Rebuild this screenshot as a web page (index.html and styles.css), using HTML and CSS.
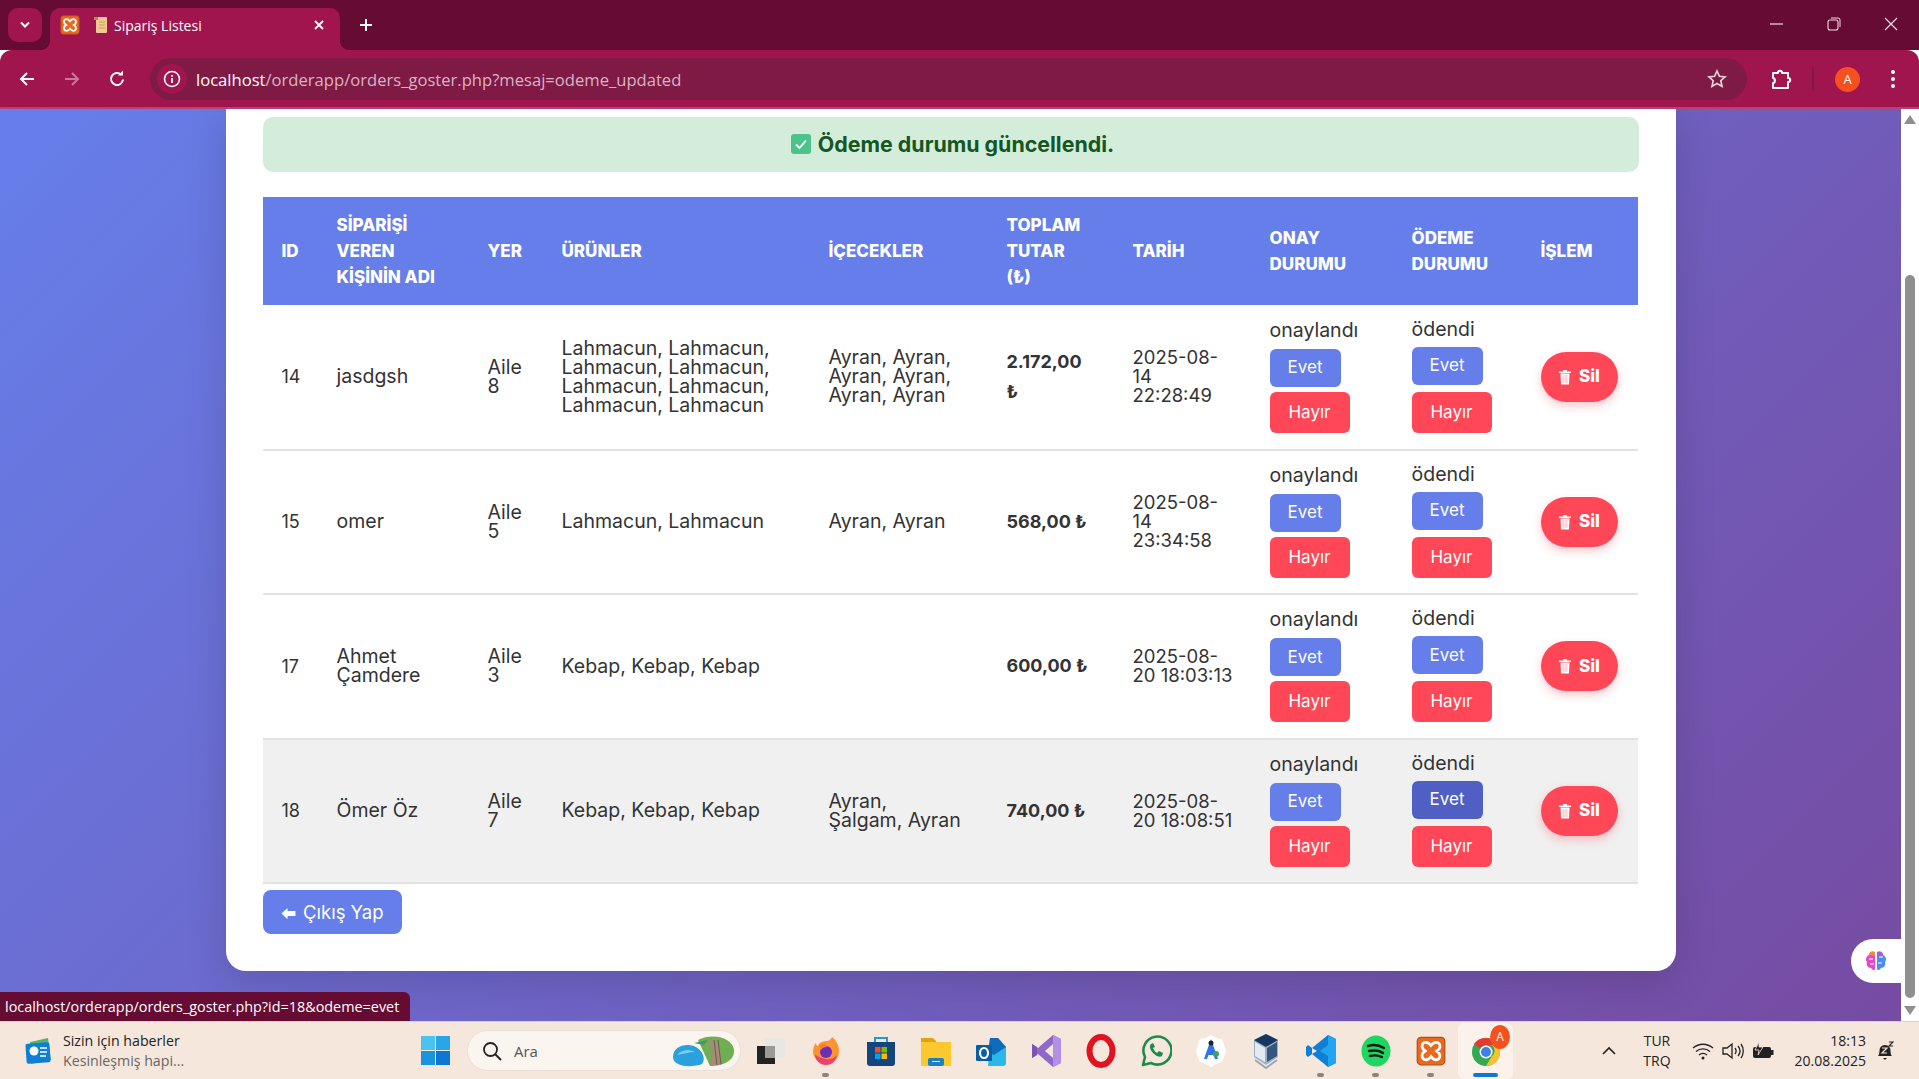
FILE: index.html
```html
<!DOCTYPE html>
<html lang="tr">
<head>
<meta charset="utf-8">
<title>Sipariş Listesi</title>
<link rel="stylesheet" href="styles.css">
</head>
<body>
<svg class="sprite" width="0" height="0">
	<symbol id="xampp" viewBox="0 0 24 24">
		<rect x="1" y="1" width="22" height="22" rx="3" fill="#e8691f"/>
		<rect x="1" y="1" width="22" height="22" rx="3" fill="none" stroke="#b44f14" stroke-width="1"/>
		<path d="M8 5c-3 0-4 3-2.400 5.500L7.500 12l-2 1.500C4 16 5 19 8 19c2 0 3-1.200 4-2.500 1 1.300 2 2.500 4 2.500 3 0 4-3 2.400-5.500l-1.900-1.500 2-1.500C20 8 19 5 16 5c-2 0-3 1.200-4 2.500C11 6.200 10 5 8 5z" fill="none" stroke="#fff" stroke-width="2.200"/>
	</symbol>
	<symbol id="trash" viewBox="0 0 14 16">
		<path d="M1 2.500h12v1.500H1zM5 1h4v1.500H5zM2.500 4.500h9L11 15.500H3z" fill="#fff"/>
		<path d="M5.200 6v8M7 6v8M8.800 6v8" stroke="#ff8f99" stroke-width=".6"/>
	</symbol>
</svg>

<div class="tabbar">
	<div class="tab-list-btn"><svg width="12" height="8" viewBox="0 0 12 8"><path d="M2 1.500l4 4 4-4" fill="none" stroke="#fff" stroke-width="2"/></svg></div>
	<div class="tab">
		<svg class="fav" width="20" height="20"><use href="#xampp"/></svg>
		<svg class="scroll-ico" width="14" height="18" viewBox="0 0 14 18"><rect x="2" y="1" width="11" height="16" rx="1" fill="#f2c98e"/><rect x="0" y="1" width="4" height="3" fill="#b98a4e"/><path d="M5 6h6M5 9h6M5 12h6" stroke="#c99c62"/></svg>
		<span class="tab-title">Sipariş Listesi</span>
		<svg class="tab-close" width="12" height="12" viewBox="0 0 12 12"><path d="M2 2l8 8M10 2l-8 8" stroke="#fff" stroke-width="1.800"/></svg>
	</div>
	<svg class="new-tab" width="14" height="14" viewBox="0 0 14 14"><path d="M7 1v12M1 7h12" stroke="#fff" stroke-width="2"/></svg>
	<div class="win-controls">
		<svg width="14" height="14" viewBox="0 0 14 14"><path d="M0 7h13" stroke="#f3dbe5" stroke-width="1.200"/></svg>
		<svg width="14" height="14" viewBox="0 0 14 14"><rect x="1" y="3" width="10" height="10" rx="2" fill="none" stroke="#f3dbe5" stroke-width="1.100"/><path d="M4 1h7a2 2 0 0 1 2 2v7" fill="none" stroke="#f3dbe5"/></svg>
		<svg width="14" height="14" viewBox="0 0 14 14"><path d="M1 1l12 12M13 1L1 13" stroke="#f3dbe5" stroke-width="1.200"/></svg>
	</div>
</div>

<div class="toolbar">
	<svg class="nav-ico" width="18" height="18" viewBox="0 0 18 18"><path d="M16 9H3M9 3L3 9l6 6" fill="none" stroke="#fff" stroke-width="2"/></svg>
	<svg class="nav-ico" width="18" height="18" viewBox="0 0 18 18"><path d="M2 9h13M9 3l6 6-6 6" fill="none" stroke="#c9789a" stroke-width="2"/></svg>
	<svg class="nav-ico" width="18" height="18" viewBox="0 0 18 18"><path d="M15 9.500A6 6 0 1 1 13 4.500" fill="none" stroke="#fff" stroke-width="2"/><path d="M10 5.500h5v-5z" fill="#fff"/></svg>
	<div class="omnibox">
		<div class="info-chip"><svg width="18" height="18" viewBox="0 0 18 18"><circle cx="9" cy="9" r="7.500" fill="none" stroke="#fff" stroke-width="1.600"/><path d="M9 8v5M9 5v1.800" stroke="#fff" stroke-width="1.800"/></svg></div>
		<span class="url"><b>localhost</b>/orderapp/orders_goster.php?mesaj=odeme_updated</span>
		<svg class="star" width="20" height="20" viewBox="0 0 20 20"><path d="M10 2l2.400 5.300 5.600.6-4.200 3.800 1.200 5.700L10 14.500l-5 2.900 1.200-5.700L2 7.900l5.600-.6z" fill="none" stroke="#e8d3dc" stroke-width="1.700"/></svg>
	</div>
	<svg class="puzzle" width="22" height="22" viewBox="0 0 22 22"><path d="M3 5h5c0-3 4-3 4 0h6v5c3 0 3 4 0 4v6H3v-5c2.500 0 2.500-5 0-5z" fill="none" stroke="#fff" stroke-width="2" stroke-linejoin="round"/></svg>
	<span class="tool-sep"></span>
	<span class="avatar">A</span>
	<svg class="dots" width="6" height="20" viewBox="0 0 6 20"><circle cx="3" cy="3" r="2" fill="#fff"/><circle cx="3" cy="10" r="2" fill="#fff"/><circle cx="3" cy="17" r="2" fill="#fff"/></svg>
</div>
<div class="toolbar-line"></div>

<div class="viewport">
	<div class="page">
		<div class="card">
			<div class="alert">
				<svg width="20" height="20" viewBox="0 0 20 20"><rect x="0" y="0" width="20" height="20" rx="3" fill="#4cc38a"/><path d="M5 10.500l3.500 3.500L15 6.500" fill="none" stroke="#fff" stroke-width="1.800"/></svg>
				Ödeme durumu güncellendi.
			</div>
			<table class="orders">
				<thead>
					<tr>
						<th class="c-id">ID</th>
						<th class="c-name">SİPARİŞİ<br>VEREN<br>KİŞİNİN ADI</th>
						<th class="c-place">YER</th>
						<th class="c-items">ÜRÜNLER</th>
						<th class="c-drinks">İÇECEKLER</th>
						<th class="c-total">TOPLAM<br>TUTAR<br>(₺)</th>
						<th class="c-date">TARİH</th>
						<th class="c-ok">ONAY<br>DURUMU</th>
						<th class="c-pay">ÖDEME<br>DURUMU</th>
						<th class="c-act">İŞLEM</th>
					</tr>
				</thead>
				<tbody>
					<tr>
						<td class="cell-id">14</td>
						<td>jasdgsh</td>
						<td>Aile<br>8</td>
						<td>Lahmacun, Lahmacun,<br>Lahmacun, Lahmacun,<br>Lahmacun, Lahmacun,<br>Lahmacun, Lahmacun</td>
						<td>Ayran, Ayran,<br>Ayran, Ayran,<br>Ayran, Ayran</td>
						<td><span class="amount">2.172,00<br>₺</span></td>
						<td class="cell-date">2025-08-<br>14<br>22:28:49</td>
						<td><div class="status"><span>onaylandı</span><a class="btn btn-yes">Evet</a><a class="btn btn-no">Hayır</a></div></td>
						<td><div class="status status-pay"><span>ödendi</span><a class="btn btn-yes">Evet</a><a class="btn btn-no">Hayır</a></div></td>
						<td><a class="btn-del"><svg width="14" height="16"><use href="#trash"/></svg>Sil</a></td>
					</tr>
					<tr>
						<td class="cell-id">15</td>
						<td>omer</td>
						<td>Aile<br>5</td>
						<td>Lahmacun, Lahmacun</td>
						<td>Ayran, Ayran</td>
						<td><span class="amount">568,00 ₺</span></td>
						<td class="cell-date">2025-08-<br>14<br>23:34:58</td>
						<td><div class="status"><span>onaylandı</span><a class="btn btn-yes">Evet</a><a class="btn btn-no">Hayır</a></div></td>
						<td><div class="status status-pay"><span>ödendi</span><a class="btn btn-yes">Evet</a><a class="btn btn-no">Hayır</a></div></td>
						<td><a class="btn-del"><svg width="14" height="16"><use href="#trash"/></svg>Sil</a></td>
					</tr>
					<tr>
						<td class="cell-id">17</td>
						<td>Ahmet<br>Çamdere</td>
						<td>Aile<br>3</td>
						<td>Kebap, Kebap, Kebap</td>
						<td></td>
						<td><span class="amount">600,00 ₺</span></td>
						<td class="cell-date">2025-08-<br>20 18:03:13</td>
						<td><div class="status"><span>onaylandı</span><a class="btn btn-yes">Evet</a><a class="btn btn-no">Hayır</a></div></td>
						<td><div class="status status-pay"><span>ödendi</span><a class="btn btn-yes">Evet</a><a class="btn btn-no">Hayır</a></div></td>
						<td><a class="btn-del"><svg width="14" height="16"><use href="#trash"/></svg>Sil</a></td>
					</tr>
					<tr class="row-hover">
						<td class="cell-id">18</td>
						<td>Ömer Öz</td>
						<td>Aile<br>7</td>
						<td>Kebap, Kebap, Kebap</td>
						<td>Ayran,<br>Şalgam, Ayran</td>
						<td><span class="amount">740,00 ₺</span></td>
						<td class="cell-date">2025-08-<br>20 18:08:51</td>
						<td><div class="status"><span>onaylandı</span><a class="btn btn-yes">Evet</a><a class="btn btn-no">Hayır</a></div></td>
						<td><div class="status status-pay"><span>ödendi</span><a class="btn btn-yes btn-hover">Evet</a><a class="btn btn-no">Hayır</a></div></td>
						<td><a class="btn-del"><svg width="14" height="16"><use href="#trash"/></svg>Sil</a></td>
					</tr>
				</tbody>
			</table>
			<a class="btn-logout"><span class="logout-arrow">⬅</span> Çıkış Yap</a>
		</div>
	</div>
	<div class="scrollbar">
		<span class="arrow-up"></span>
		<span class="thumb"></span>
		<span class="arrow-down"></span>
	</div>
	<div class="status-bubble">localhost/orderapp/orders_goster.php?id=18&amp;odeme=evet</div>
	<div class="brain">
		<svg width="24" height="24" viewBox="0 0 24 24"><path d="M11 3C8 1.500 5 3 5 6 2 7 1 11 3 13c-1 3 1 6 4 6 1 2 3 2.500 4 1.500z" fill="#e648c4"/><path d="M13 3c3-1.500 6 0 6 3 3 1 4 5 2 7 1 3-1 6-4 6-1 2-3 2.500-4 1.500z" fill="#4e8df0"/><path d="M11 3C8 1.500 5 3 5 6l6 1z" fill="#f58a3c"/><path d="M13 3c3-1.500 6 0 6 3l-6 2z" fill="#a45be0"/><path d="M5 10h4M6 15h4M15 8h4M14 14h4" stroke="#fff"/></svg>
	</div>
</div>

<div class="taskbar">
	<div class="news">
		<svg width="30" height="30" viewBox="0 0 30 30"><path d="M6 6l18-4 3 22-20 4z" fill="#58b368"/><rect x="2" y="7" width="24" height="20" rx="2" fill="#0f7fd6" transform="rotate(-4 14 17)"/><circle cx="10" cy="15" r="4.500" fill="#fff"/><path d="M16 12h7M16 16h7M16 20h6" stroke="#fff" stroke-width="1.500"/></svg>
		<div class="news-text"><span>Sizin için haberler</span><small>Kesinleşmiş hapi...</small></div>
	</div>
	<svg class="win-logo" width="29" height="29" viewBox="0 0 29 29"><rect width="14" height="14" fill="#4cc2f1"/><rect x="15" width="14" height="14" fill="#2aa5e8"/><rect y="15" width="14" height="14" fill="#1b94e0"/><rect x="15" y="15" width="14" height="14" fill="#0a78d4"/></svg>
	<div class="search">
		<svg width="20" height="20" viewBox="0 0 20 20"><circle cx="8.500" cy="8.500" r="6.500" fill="none" stroke="#222" stroke-width="1.800"/><path d="M13 13l6 6" stroke="#222" stroke-width="2"/></svg>
		<span>Ara</span>
		<svg class="search-art" width="64" height="34" viewBox="0 0 64 34"><path d="M26 6c14-7 34-3 36 10 1 10-10 16-24 16z" fill="#6fae52"/><path d="M36 5c8-1 14 8 13 26H38C41 20 39 12 36 5z" fill="#a58c78"/><path d="M42 6l3 25M46 6l3 24" stroke="#6d5a4c"/><path d="M22 9l14-3-4 5z" fill="#3d9a6a"/><path d="M1 23C1 13 12 9 22 12c9 4 12 13 8 18-10 4-29 3-29-7z" fill="#2aa0dc"/><path d="M5 21c4-5 12-6 18-3-6 0-12 2-18 3z" fill="#7fd0ee"/></svg>
	</div>
	<div class="apps">
		<div class="app"><svg width="30" height="32" viewBox="0 0 30 32"><rect x="1" y="11" width="18" height="18" fill="#222"/><rect x="9" y="3" width="20" height="20" fill="#e9e7e4"/><rect x="9" y="11" width="10" height="12" fill="#9c9a98"/></svg></div>
		<div class="app pip"><svg width="30" height="32" viewBox="0 0 30 32"><path d="M21 2c4 3 7 8 7 14a13 13 0 0 1-26 0c0-4 2-7 3-8 0 2 1 3 2 3 1-4 6-5 9-5 2 0 4-2 5-4z" fill="#ff9330"/><path d="M4 19a11 11 0 0 0 22 0c0 3-6 6-11 5S5 21 4 19z" fill="#ef3f6d"/><circle cx="15" cy="17" r="6" fill="#6a2fb8"/><path d="M8 10c3-2 7-1 8 2-3 0-5 1-6 3z" fill="#ff7a2e"/></svg></div>
		<div class="app"><svg width="30" height="32" viewBox="0 0 30 32"><path d="M9 7V3h12v4" fill="none" stroke="#1b9bd8" stroke-width="2"/><path d="M1 7h28v21a3 3 0 0 1-3 3H4a3 3 0 0 1-3-3z" fill="#14467d"/><rect x="9" y="12" width="5.500" height="5.500" fill="#f25022"/><rect x="15.500" y="12" width="5.500" height="5.500" fill="#7fba00"/><rect x="9" y="18.500" width="5.500" height="5.500" fill="#00a4ef"/><rect x="15.500" y="18.500" width="5.500" height="5.500" fill="#ffb900"/></svg></div>
		<div class="app"><svg width="30" height="32" viewBox="0 0 30 32"><path d="M0 3h12l3 3v4H0z" fill="#e0a408"/><rect y="7" width="30" height="24" fill="#fbc92f"/><rect x="7" y="23" width="16" height="8" rx="2" fill="#1b7fc6"/><path d="M11 26.500h8" stroke="#fff"/></svg></div>
		<div class="app"><svg width="30" height="32" viewBox="0 0 30 32"><path d="M14 3h8l8 9v16a3 3 0 0 1-3 3H12z" fill="#2cb7ea"/><path d="M14 3h8l8 9-12 8-6-3z" fill="#0f6cbd"/><rect x="0" y="10" width="16" height="16" rx="1" fill="#0a5ea8"/><ellipse cx="8" cy="18" rx="4" ry="5" fill="none" stroke="#fff" stroke-width="2.200"/></svg></div>
		<div class="app"><svg width="30" height="34" viewBox="0 0 30 34"><path d="M22 1l8 4v24l-8 4-15-13-6 4V10l6 4z" fill="#8f68c9"/><path d="M22 1l8 4v24l-8 4z" fill="#b48fe6"/><path d="M22 10v14l-8-7z" fill="#f5e6dc"/><path d="M1 10l5 3v8l-5 3z" fill="#7a56b3"/></svg></div>
		<div class="app"><svg width="30" height="34" viewBox="0 0 30 34"><ellipse cx="15" cy="17" rx="11.500" ry="14" fill="none" stroke="#e0131f" stroke-width="6"/></svg></div>
		<div class="app"><svg width="32" height="34" viewBox="0 0 32 34"><path d="M3 31l2-8A14 14 0 1 1 11 29z" fill="none" stroke="#1f8a4d" stroke-width="2.600" stroke-linejoin="round"/><path d="M11 10c-2 2-1 6 2 9s7 5 9 3l1-3-4-2-2 2c-2-1-3-3-4-5l2-1-2-4z" fill="#1f8a4d"/></svg></div>
		<div class="app"><svg width="30" height="34" viewBox="0 0 30 34"><path d="M15 1l5 3 6 1 2 6 2 6-2 6-2 5-6 2-5 3-5-3-6-2-2-5-2-6 2-6 2-6 6-1z" fill="#fff"/><path d="M15 5l7 20h-3l-1.500-4h-5L11 25H8z" fill="#2f74e8"/><circle cx="15" cy="9" r="2.500" fill="#223"/><circle cx="20" cy="20" r="3" fill="#3fa35b"/></svg></div>
		<div class="app"><svg width="30" height="36" viewBox="0 0 30 36"><path d="M15 1l12 6v17L15 32 3 24V7z" fill="#9fb0c6"/><path d="M15 1l12 6-12 7L3 7z" fill="#16365f"/><path d="M4 9l10 6v14L4 23z" fill="#e4eaf1"/><path d="M26 9l-10 6v14l10-6z" fill="#35567f"/><path d="M4 27l11 8 11-8" fill="none" stroke="#9aa7b8" stroke-width="2"/></svg></div>
		<div class="app pip"><svg width="30" height="34" viewBox="0 0 30 34"><path d="M22 1l8 4v24l-8 4L6 20l-4 3-2-2v-8l2-2 4 3z" fill="#0f7fd6"/><path d="M22 1l8 4v24l-8 4V22l-8-5 8-6z" fill="#22a5ee"/><path d="M6 14l5 3-5 3z" fill="#f5e6dc"/></svg></div>
		<div class="app pip"><svg width="30" height="32" viewBox="0 0 30 32"><ellipse cx="15" cy="16" rx="14.500" ry="15.500" fill="#1ed760"/><path d="M7 11c6-2 11-1 16 2M8 16c5-1 10-1 14 2M9 21c4-1 8-1 12 1" fill="none" stroke="#181818" stroke-width="2.400" stroke-linecap="round"/></svg></div>
		<div class="app pip"><svg width="30" height="32" viewBox="0 0 30 32"><use href="#xampp"/></svg></div>
		<div class="app app-active">
			<svg width="30" height="32" viewBox="0 0 30 32"><circle cx="15" cy="17" r="14" fill="#34a853"/><path d="M15 3a14 14 0 0 1 12.200 7H15a7 7 0 0 0-6 3.500L3 9a14 14 0 0 1 12-6z" fill="#e5392f"/><path d="M27.200 10A14 14 0 0 1 15 31l6-10a7 7 0 0 0 0-11z" fill="#fbc02d"/><circle cx="15" cy="17" r="6.500" fill="#fff"/><circle cx="15" cy="17" r="5" fill="#3f7fe8"/></svg>
			<span class="app-badge">A</span>
		</div>
	</div>
	<div class="tray">
		<svg width="16" height="10" viewBox="0 0 16 10"><path d="M2 8l6-6 6 6" fill="none" stroke="#222" stroke-width="1.600"/></svg>
		<div class="lang">TUR<br>TRQ</div>
		<div class="tray-icons">
			<svg width="22" height="18" viewBox="0 0 22 18"><path d="M1 6c6-5 14-5 20 0M4 9.500c4-3.500 10-3.500 14 0M7 13c2.500-2 5.500-2 8 0" fill="none" stroke="#222" stroke-width="1.400"/><circle cx="11" cy="16" r="1.500" fill="#222"/></svg>
			<svg width="22" height="18" viewBox="0 0 22 18"><path d="M1 6h4l5-4v14l-5-4H1z" fill="none" stroke="#222" stroke-width="1.300"/><path d="M13 6c1.500 2 1.500 4 0 6M16 4c2.500 3 2.500 7 0 10M19 2c3 4 3 10 0 14" fill="none" stroke="#222" stroke-width="1.300"/></svg>
			<svg width="22" height="18" viewBox="0 0 22 18"><rect x="1" y="5" width="18" height="11" rx="2" fill="#222"/><rect x="19" y="8" width="2.500" height="5" fill="#222"/><path d="M7 0L3 8h4l-1 5 5-8H7z" fill="#222" stroke="#f5e6dc" stroke-width=".8"/></svg>
		</div>
		<div class="clock">18:13<br>20.08.2025</div>
		<svg class="bell" width="18" height="20" viewBox="0 0 18 20"><path d="M2 15c2-2 1-5 2-8 1-2 3-3 5-3s4 1 5 3c1 3 0 6 2 8z" fill="#222"/><path d="M7 17h4l-2 2z" fill="#222"/><path d="M6 7h5l-5 5h5" fill="none" stroke="#f5e6dc" stroke-width="1.200"/><path d="M13 1h4l-4 4h4" fill="none" stroke="#222" stroke-width="1.100"/></svg>
	</div>
</div>
</body>
</html>
```

FILE: styles.css
```css
*{margin:0; padding:0; box-sizing:border-box;}
html,body{height:100%; overflow:hidden;}
body{display:flex; flex-direction:column; font-family:"Inter","Noto Sans CJK SC",sans-serif; color:#333;}
.sprite{position:absolute;}
a{text-decoration:none;}

/* browser */
.tabbar{height:50px; flex:none; display:flex; align-items:flex-start; background:#660c33; padding:8px 0 0 8px; font-family:"Open Sans",sans-serif;}
.tab-list-btn{width:34px; height:34px; background:#a1154f; border-radius:10px; display:flex; align-items:center; justify-content:center;}
.tab{position:relative; width:290px; height:42px; margin-left:8px; padding:0 15px 8px 10px; background:#a1154f; border-radius:10px 10px 0 0; display:flex; align-items:center; color:#fff; font-size:14px;}
.tab:before,.tab:after{content:''; position:absolute; bottom:0; width:10px; height:10px;}
.tab:before{left:-10px; background:radial-gradient(circle at 0 0,#660c33 10px,#a1154f 10.500px);}
.tab:after{right:-10px; background:radial-gradient(circle at 100% 0,#660c33 10px,#a1154f 10.500px);}
.scroll-ico{margin-left:14px;}
.tab-title{margin-left:6px; flex:1;}
.new-tab{margin:10px 0 0 19px;}
.win-controls{margin-left:auto; display:flex; gap:43px; padding:9px 21px 0 0;}
.toolbar{height:57px; flex:none; display:flex; align-items:center; background:#a1154f; padding:1px 0 0 18px; border-radius:12px 12px 0 0; font-family:"Open Sans",sans-serif;}
.nav-ico{margin-right:27px;}
.nav-ico:nth-of-type(3){margin-right:24px;}
.omnibox{width:1597px; height:42px; background:#7f1a45; border-radius:21px; display:flex; align-items:center; padding:0 20px 0 7px;}
.info-chip{width:30px; height:30px; border-radius:50%; background:#a1154f; display:flex; align-items:center; justify-content:center;}
.url{margin-left:9px; flex:1; font-size:16.600px; color:#d9b3c4;}
.url b{font-weight:400; color:#fff;}
.puzzle{margin-left:23px;}
.tool-sep{width:2px; height:24px; background:#7f1a45; margin-left:20px;}
.avatar{width:25px; height:25px; margin-left:21px; border-radius:50%; background:#f4511e; color:#fff; font-size:13px; text-align:center; line-height:25px;}
.dots{margin-left:30px;}
.toolbar-line{height:2px; flex:none; background:#b8426f;}

/* page */
.viewport{position:relative; flex:1; min-height:0; display:flex;}
.page{flex:1; background:linear-gradient(135deg,#667eea 0%,#764ba2 100%); overflow:hidden;}
.card{width:1450px; height:862px; margin-left:226px; padding:8px 37px 0; background:#fff; border-radius:0 0 20px 20px; box-shadow:0 10px 40px rgba(0,0,0,.15);}
.alert{height:55px; padding:0 0 2px 3px; background:#d4edda; border-radius:10px; color:#155724; font-size:21.400px; font-weight:700; display:flex; align-items:center; justify-content:center; gap:7px;}
.orders{width:1375px; margin-top:25px; border-collapse:collapse; table-layout:fixed; font-size:19.500px; line-height:19px;}
.orders th{height:108px; padding:0 18.500px; background:#667eea; color:#fff; font-size:17px; font-weight:800; line-height:26px; text-align:left;}
.orders td{height:144.500px; padding:0 18.500px; border-bottom:2px solid #e2e2e2; white-space:nowrap;}
.orders .cell-id{font-size:18px;}
.orders .cell-date{font-size:18.500px;}
.row-hover td{background:#f0f0f0;}
.c-id{width:55px;}
.c-name{width:151px;}
.c-place{width:74px;}
.c-items{width:267px;}
.c-drinks{width:178px;}
.c-total{width:126px;}
.c-date{width:137px;}
.c-ok{width:142px;}
.c-pay{width:129px;}
.amount{display:block; font-size:18px; font-weight:700; line-height:30px;}
.status{display:flex; flex-direction:column; align-items:flex-start;}
.status span{margin-bottom:9px;}
.status-pay{padding-bottom:1px;}
.status-pay span{margin-bottom:8px;}
.btn{display:flex; align-items:center; justify-content:center; border-radius:6px; color:#fff; font-size:17px;}
.btn-yes{width:71px; height:38px; background:#667eea;}
.btn-no{width:80px; height:41px; margin-top:5px; background:#ff4757;}
.status-pay .btn-no{margin-top:7px;}
.btn-hover{background:#4f5fc4;}
.btn-del{width:77px; height:50px; display:flex; align-items:center; justify-content:center; gap:7px; background:#ff4757; border-radius:25px; color:#fff; font-size:17px; font-weight:800; box-shadow:0 4px 10px rgba(255,71,87,.3);}
.btn-logout{display:inline-flex; align-items:center; gap:7px; height:44px; margin-top:6px; padding:0 18px; background:#667eea; border-radius:8px; color:#fff; font-size:18.500px;}
.logout-arrow{font-size:15px;}

.scrollbar{width:18px; flex:none; background:#fff; position:relative; display:flex; flex-direction:column; align-items:center;}
.thumb{position:absolute; top:166px; left:4px; width:10px; height:723px; background:#8f8f8f; border-radius:5px;}
.arrow-up,.arrow-down{position:absolute; left:3px; border-left:6px solid transparent; border-right:6px solid transparent;}
.arrow-up{top:6px; border-bottom:9px solid #8f8f8f;}
.arrow-down{bottom:6px; border-top:9px solid #8f8f8f;}
.status-bubble{position:absolute; left:0; bottom:0; height:29px; width:410px; padding:0 5px; background:#660c33; border-radius:0 6px 0 0; color:#fff; font-family:"Open Sans",sans-serif; font-size:14.400px; line-height:29px;}
.brain{position:absolute; right:18px; top:830px; width:50px; height:44px; padding:10px 0 0 13px; background:#fff; border-radius:22px 0 0 22px;}

/* taskbar */
.taskbar{height:58px; flex:none; display:flex; align-items:center; background:#f6e7dc; border-top:1px solid #d9cfc9; font-family:"Open Sans",sans-serif; color:#222;}
.news{width:421px; padding-left:24px; display:flex; align-items:center; gap:9px; font-size:14.200px; line-height:20px;}
.news-text{display:flex; flex-direction:column;}
.news-text small{font-size:14.200px; color:#666;}
.search{width:274px; height:41px; margin-left:17px; padding:0 4px 0 14px; display:flex; align-items:center; background:#fbf5f0; border:1px solid #eadfd6; border-radius:21px; font-size:15px; color:#555;}
.search span{margin-left:12px; flex:1;}
.apps{display:flex; margin-left:2px;}
.app{position:relative; width:55px; height:56px; display:flex; align-items:center; justify-content:center;}
.app.pip:after,.app-active:after{content:''; position:absolute; bottom:2px; left:24px; width:7px; height:4px; border-radius:2px; background:#8a8380;}
.app-active{background:#fbf2ec; border-radius:6px;}
.app-active:after{left:15px; width:25px; background:#0a78d4;}
.app-badge{position:absolute; top:2px; right:3px; width:20px; height:24px; border-radius:50%; background:#f4511e; color:#fff; font-size:12px; text-align:center; line-height:24px;}
.tray{margin-left:auto; padding-right:25px; display:flex; align-items:center; font-size:14px;}
.lang{margin-left:26px; line-height:20px; text-align:center;}
.tray-icons{margin-left:21px; display:flex; gap:8px;}
.clock{margin-left:21px; text-align:right; line-height:20px;}
.bell{margin-left:10px;}
```
